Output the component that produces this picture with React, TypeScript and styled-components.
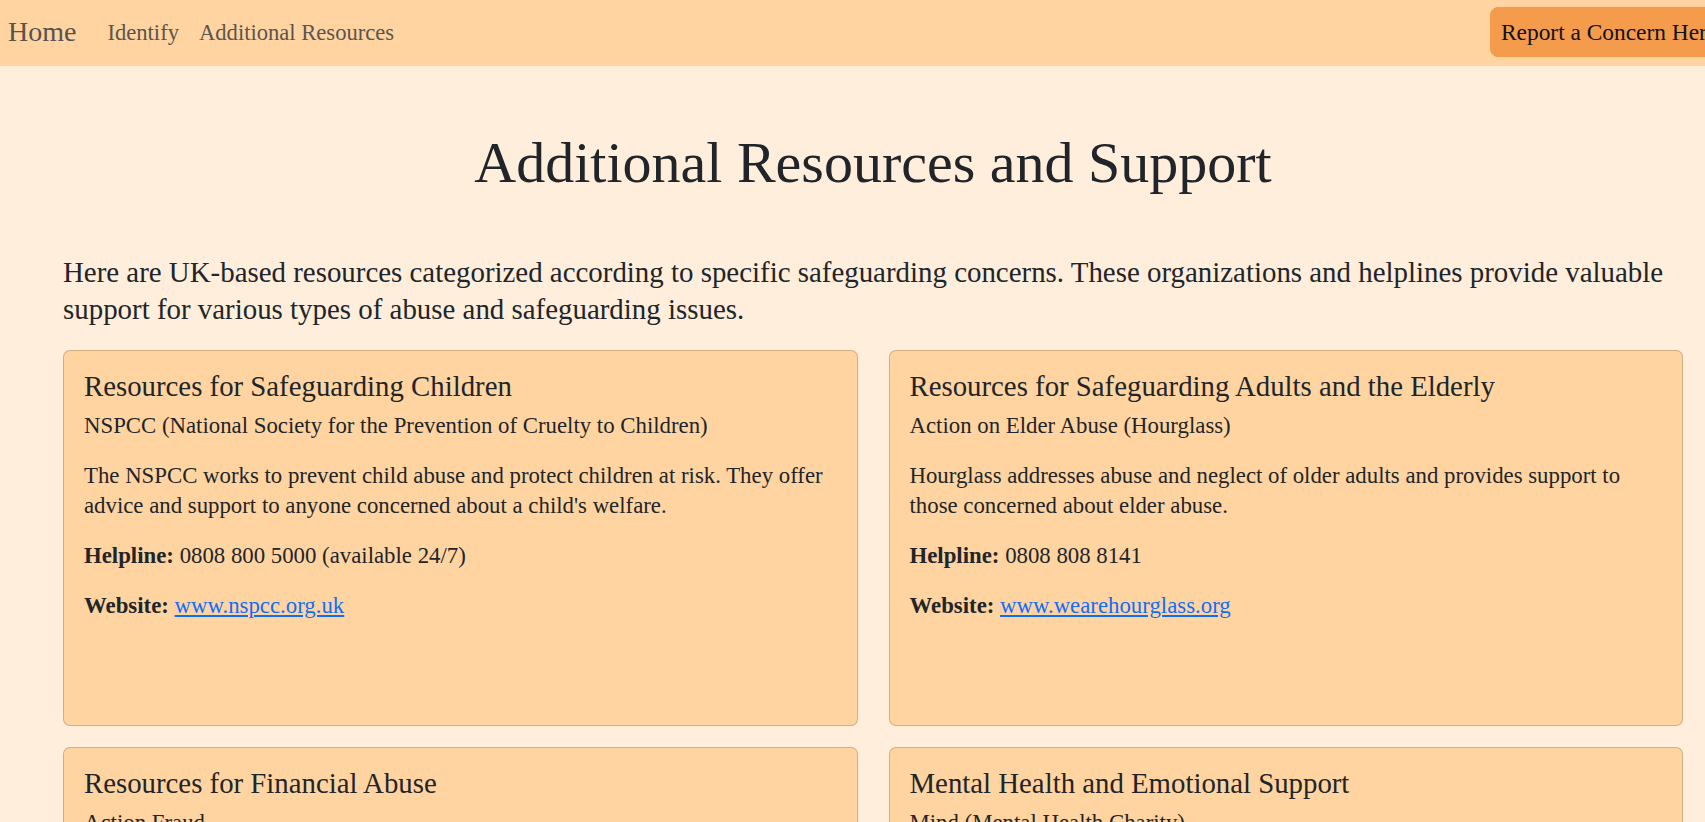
import React from "react";
import styled, { createGlobalStyle } from "styled-components";

const GlobalStyle = createGlobalStyle`
  html, body {
    margin: 0;
    padding: 0;
  }
  body {
    background: #ffeedc;
    color: #212529;
    font-family: "Liberation Serif", "Times New Roman", serif;
    overflow-x: hidden;
  }
  * { box-sizing: border-box; }
`;

const Navbar = styled.nav`
  display: flex;
  align-items: center;
  height: 66px;
  padding-left: 8px;
  background: #ffd4a1;
  overflow: hidden;
`;

const Brand = styled.a`
  font-size: 28px;
  line-height: 34px;
  margin-right: 21px;
  margin-bottom: 2px;
  color: #55524f;
  text-decoration: none;
  white-space: nowrap;
`;

const NavLinks = styled.div`
  display: flex;
  align-items: center;
`;

const NavLink = styled.a`
  padding: 0 10px;
  font-size: 22.6px;
  line-height: 30px;
  color: #5a554f;
  text-decoration: none;
  white-space: nowrap;
`;

const Spacer = styled.div`
  flex: 1;
`;

const ButtonSlot = styled.div`
  width: 215px;
  flex-shrink: 0;
  display: flex;
  align-items: center;
  min-width: 0;
`;

const ReportButton = styled.button`
  flex-shrink: 0;
  height: 50px;
  margin-bottom: 2px;
  padding: 0 10px;
  border: 1px solid #f49c4c;
  border-radius: 8px;
  background: #f49c4c;
  color: #111;
  font-family: inherit;
  font-size: 23.4px;
  white-space: nowrap;
  cursor: pointer;
`;

const Main = styled.main`
  padding: 62px 22px 40px 63px;
`;

const PageTitle = styled.h1`
  margin: 0 0 56px;
  text-align: center;
  font-size: 58px;
  line-height: 70px;
  font-weight: 400;
`;

const Lead = styled.p`
  margin: 0 0 22px;
  font-size: 28.9px;
  line-height: 37px;
`;

const CardGrid = styled.div`
  display: grid;
  grid-template-columns: 1fr 1fr;
  column-gap: 31px;
  row-gap: 21px;
`;

const Card = styled.section`
  min-height: 376px;
  padding: 20px;
  background: #ffd4a1;
  border: 1px solid rgba(0, 0, 0, 0.175);
  border-radius: 7px;
`;

const CardTitle = styled.h5`
  margin: 0 0 10px;
  font-size: 28.8px;
  line-height: 30px;
  font-weight: 400;
`;

const CardText = styled.p`
  margin: 0 0 20px;
  font-size: 22.8px;
  line-height: 30px;
`;

const Label = styled.strong`
  font-weight: 700;
`;

const SiteLink = styled.a`
  color: #0d6efd;
  text-decoration: underline;
`;

type Resource = {
  title: string;
  org: string;
  description: string;
  helpline: string;
  site: string;
};

const resources: Resource[] = [
  {
    title: "Resources for Safeguarding Children",
    org: "NSPCC (National Society for the Prevention of Cruelty to Children)",
    description:
      "The NSPCC works to prevent child abuse and protect children at risk. They offer advice and support to anyone concerned about a child's welfare.",
    helpline: "0808 800 5000 (available 24/7)",
    site: "www.nspcc.org.uk",
  },
  {
    title: "Resources for Safeguarding Adults and the Elderly",
    org: "Action on Elder Abuse (Hourglass)",
    description:
      "Hourglass addresses abuse and neglect of older adults and provides support to those concerned about elder abuse.",
    helpline: "0808 808 8141",
    site: "www.wearehourglass.org",
  },
  {
    title: "Resources for Financial Abuse",
    org: "Action Fraud",
    description:
      "Action Fraud is the UK's national reporting centre for fraud and cybercrime, including financial abuse and scams.",
    helpline: "0300 123 2040",
    site: "www.actionfraud.police.uk",
  },
  {
    title: "Mental Health and Emotional Support",
    org: "Mind (Mental Health Charity)",
    description:
      "Mind provides advice and support to empower anyone experiencing a mental health problem.",
    helpline: "0300 123 3393",
    site: "www.mind.org.uk",
  },
];

export default function App() {
  return (
    <>
      <GlobalStyle />
      <Navbar>
        <Brand href="#">Home</Brand>
        <NavLinks>
          <NavLink href="#">Identify</NavLink>
          <NavLink href="#">Additional Resources</NavLink>
        </NavLinks>
        <Spacer />
        <ButtonSlot>
          <ReportButton>Report a Concern Here</ReportButton>
        </ButtonSlot>
      </Navbar>
      <Main>
        <PageTitle>Additional Resources and Support</PageTitle>
        <Lead>
          Here are UK-based resources categorized according to specific
          safeguarding concerns. These organizations and helplines provide
          valuable support for various types of abuse and safeguarding issues.
        </Lead>
        <CardGrid>
          {resources.map((r) => (
            <Card key={r.title}>
              <CardTitle>{r.title}</CardTitle>
              <CardText>{r.org}</CardText>
              <CardText>{r.description}</CardText>
              <CardText>
                <Label>Helpline:</Label> {r.helpline}
              </CardText>
              <CardText>
                <Label>Website:</Label>{" "}
                <SiteLink href="#">{r.site}</SiteLink>
              </CardText>
            </Card>
          ))}
        </CardGrid>
      </Main>
    </>
  );
}
